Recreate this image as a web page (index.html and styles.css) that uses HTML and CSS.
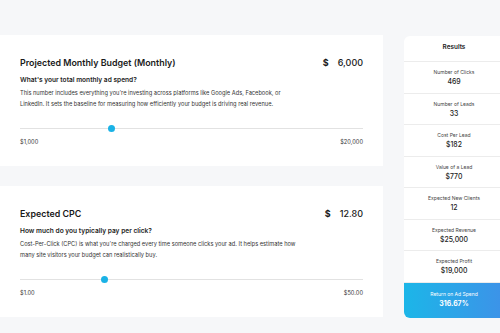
FILE: index.html
```html
<!DOCTYPE html>
<html lang="en">
<head>
  <meta charset="UTF-8">
  <meta name="viewport" content="width=device-width, initial-scale=1.0">
  <title>Ad Spend Calculator</title>
  <link rel="stylesheet" href="styles.css">
</head>
<body>

  <div class="layout">
    <div class="inputs">

      <section class="card">
        <div class="card-head">
          <h2>Projected Monthly Budget (Monthly)</h2>
          <div class="amount"><span class="cur">$</span><span>6,000</span></div>
        </div>
        <h3>What's your total monthly ad spend?</h3>
        <p>This number includes everything you're investing across platforms like Google Ads, Facebook, or LinkedIn. It sets the baseline for measuring how efficiently your budget is driving real revenue.</p>
        <input class="slider" type="range" min="1000" max="20000" step="100" value="6000">
        <div class="range-labels">
          <span>$1,000</span>
          <span>$20,000</span>
        </div>
      </section>

      <section class="card">
        <div class="card-head">
          <h2>Expected CPC</h2>
          <div class="amount"><span class="cur">$</span><span>12.80</span></div>
        </div>
        <h3>How much do you typically pay per click?</h3>
        <p>Cost-Per-Click (CPC) is what you're charged every time someone clicks your ad. It helps estimate how many site visitors your budget can realistically buy.</p>
        <input class="slider" type="range" min="1" max="50" step="0.1" value="12.8">
        <div class="range-labels">
          <span>$1.00</span>
          <span>$50.00</span>
        </div>
      </section>

    </div>

    <aside class="results">
      <div class="results-title">Results</div>
      <div class="result-row">
        <div class="result-label">Number of Clicks</div>
        <div class="result-value">469</div>
      </div>
      <div class="result-row">
        <div class="result-label">Number of Leads</div>
        <div class="result-value">33</div>
      </div>
      <div class="result-row">
        <div class="result-label">Cost Per Lead</div>
        <div class="result-value">$182</div>
      </div>
      <div class="result-row">
        <div class="result-label">Value of a Lead</div>
        <div class="result-value">$770</div>
      </div>
      <div class="result-row">
        <div class="result-label">Expected New Clients</div>
        <div class="result-value">12</div>
      </div>
      <div class="result-row">
        <div class="result-label">Expected Revenue</div>
        <div class="result-value">$25,000</div>
      </div>
      <div class="result-row">
        <div class="result-label">Expected Profit</div>
        <div class="result-value">$19,000</div>
      </div>
      <div class="result-row roas">
        <div class="result-label">Return on Ad Spend</div>
        <div class="result-value">316.67%</div>
      </div>
    </aside>
  </div>

</body>
</html>
```

FILE: styles.css
```css
/* Page */
body {
  font-family: 'Inter', 'Noto Sans', sans-serif;
  background-color: #f6f7f9;
  color: #1c1c1c;
  margin: 0;
  padding: 0;
  overflow: hidden;
}

.layout {
  display: grid;
  grid-template-columns: 383px 100px;
  column-gap: 21px;
  align-items: start;
  padding-top: 35px;
  width: 504px;
}

.inputs {
  display: flex;
  flex-direction: column;
  gap: 20px;
}

/* Input cards */
.card {
  background-color: #fff;
  padding: 20px 20px 20px 20px;
}

.card-head {
  display: flex;
  justify-content: space-between;
  align-items: center;
  height: 14px;
}

.card h2 {
  margin: 0;
  font-size: 8.9px;
  font-weight: 600;
  color: #1a1a1a;
}

.amount {
  display: flex;
  gap: 9px;
  font-size: 9px;
  font-weight: 500;
  color: #1a1a1a;
}

.amount .cur {
  font-weight: 700;
}

.card h3 {
  margin: 6px 0 0;
  font-size: 6.6px;
  line-height: 10px;
  font-weight: 600;
  color: #1e1e1e;
}

.card p {
  margin: 2px 0 0;
  font-size: 5.7px;
  line-height: 11px;
  color: #333;
  max-width: 276px;
}

/* Slider */
.slider {
  -webkit-appearance: none;
  appearance: none;
  display: block;
  width: 100%;
  height: 8px;
  margin: 15px 0 0;
  background: transparent;
}

.slider::-webkit-slider-runnable-track {
  height: 1px;
  background-color: #e2e2e2;
}

.slider::-webkit-slider-thumb {
  -webkit-appearance: none;
  width: 7px;
  height: 7px;
  margin-top: -3px;
  border-radius: 50%;
  background-color: #1ab2e6;
  border: none;
}

.range-labels {
  display: flex;
  justify-content: space-between;
  margin-top: 6px;
  font-size: 5.7px;
  line-height: 8px;
  color: #333;
}

/* Results panel */
.results {
  margin-top: 1px;
  background-color: #fff;
  border-radius: 6px 0 0 6px;
  overflow: hidden;
  text-align: center;
}

.results-title {
  padding: 6px 0 9px;
  font-size: 6.4px;
  line-height: 10px;
  font-weight: 600;
  border-bottom: 1px solid #ececec;
}

.result-row {
  padding: 6px 0 5.5px;
  border-bottom: 1px solid #ececec;
}

.result-label {
  font-size: 5px;
  line-height: 8px;
  color: #444;
}

.result-value {
  margin-top: 1px;
  font-size: 6.9px;
  line-height: 10px;
  font-weight: 500;
  color: #222;
}

.roas {
  padding: 7px 0 9px;
  border-bottom: none;
  background: linear-gradient(90deg, #1cb6e8, #3d92e8);
}

.roas .result-label {
  color: #fff;
}

.roas .result-value {
  color: #fff;
  font-weight: 700;
}
```
